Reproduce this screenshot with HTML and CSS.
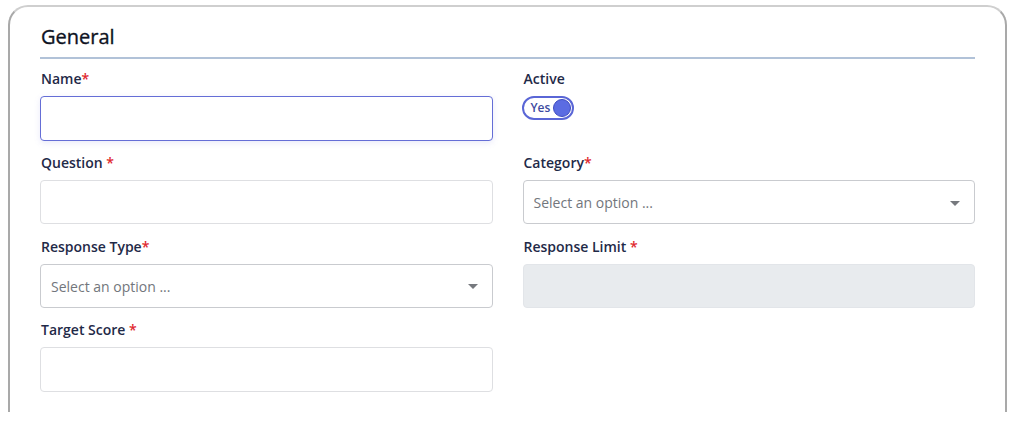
FILE: index.html
```html
<!DOCTYPE html>
<html>
<head>
<meta charset="utf-8">
<link rel="stylesheet" href="styles.css">
</head>
<body>
<div class="card">
  <h2 class="title">General</h2>
  <div class="grid">
    <div class="field">
      <label class="label">Name<span class="req">*</span></label>
      <div class="input focused"></div>
    </div>
    <div class="field">
      <label class="label">Active</label>
      <div class="toggle"><span class="toggle-text">Yes</span><span class="knob"></span></div>
    </div>
    <div class="field">
      <label class="label">Question <span class="req">*</span></label>
      <div class="input"></div>
    </div>
    <div class="field">
      <label class="label">Category<span class="req">*</span></label>
      <div class="input select"><span class="placeholder">Select an option ...</span><span class="arrow"></span></div>
    </div>
    <div class="field">
      <label class="label">Response Type<span class="req">*</span></label>
      <div class="input select"><span class="placeholder">Select an option ...</span><span class="arrow"></span></div>
    </div>
    <div class="field">
      <label class="label">Response Limit <span class="req">*</span></label>
      <div class="input disabled"></div>
    </div>
    <div class="field">
      <label class="label">Target Score <span class="req">*</span></label>
      <div class="input"></div>
    </div>
  </div>
</div>
</body>
</html>
```
FILE: styles.css
```css
* { box-sizing: border-box; }
html, body { margin: 0; padding: 0; background: #fff; }
body {
  padding: 5px 0 0 8px;
  font-family: "Open Sans", "Noto Sans", sans-serif;
  overflow: hidden;
  height: 422px;
}
.card {
  width: 999px;
  height: 407px;
  border: 2px solid #a9a9a9;
  border-top-color: #cfcfcf;
  border-bottom: none;
  border-radius: 20px 20px 0 0;
  padding: 16px 30px 0 30px;
  background: #fff;
}
.title {
  margin: 0;
  font-size: 20px;
  line-height: 28px;
  font-weight: 400;
  -webkit-text-stroke: 0.35px #0e1222;
  color: #0e1222;
  padding-left: 1px;
  padding-bottom: 6px;
  border-bottom: 2px solid #b1c2d8;
}
.grid {
  display: grid;
  grid-template-columns: 1fr 1fr;
  column-gap: 30px;
  row-gap: 11.3px;
  padding-top: 9px;
}
.field { display: flex; flex-direction: column; }
.label {
  font-size: 14px;
  line-height: 21px;
  font-weight: 600;
  color: #1f2a48;
  margin-bottom: 7px;
  padding-left: 1px;
}
.req { color: #e0282e; }
.input {
  height: 44.5px;
  border: 1px solid #dedfe2;
  border-radius: 4px;
  background: #fff;
}
.input.focused {
  border: 1.5px solid #656ed6;
  box-shadow: 0 2px 6px rgba(108, 116, 214, 0.15);
}
.input.select {
  border-color: #c9cbcf;
  display: flex;
  align-items: center;
  justify-content: space-between;
  padding: 1px 14px 0 10px;
}
.placeholder {
  font-size: 14px;
  color: #72767c;
}
.arrow {
  width: 0; height: 0;
  border-left: 5px solid transparent;
  border-right: 5px solid transparent;
  border-top: 5px solid #76797e;
  margin-top: 1px;
}
.input.disabled {
  background: #e8ebee;
  border-color: #e2e5e9;
}
.toggle {
  width: 52px;
  height: 24px;
  border: 2px solid #5a66d6;
  border-radius: 12px;
  display: flex;
  align-items: center;
  justify-content: space-between;
  padding: 0 1px 0 7px;
  margin-left: -1px;
}
.toggle-text {
  font-size: 12px;
  font-weight: 600;
  color: #3d4aa0;
  line-height: 16px;
}
.knob {
  width: 18px;
  height: 18px;
  border-radius: 50%;
  background: #5b6ce2;
  border: 1.5px solid #3f4cc0;
}
```
